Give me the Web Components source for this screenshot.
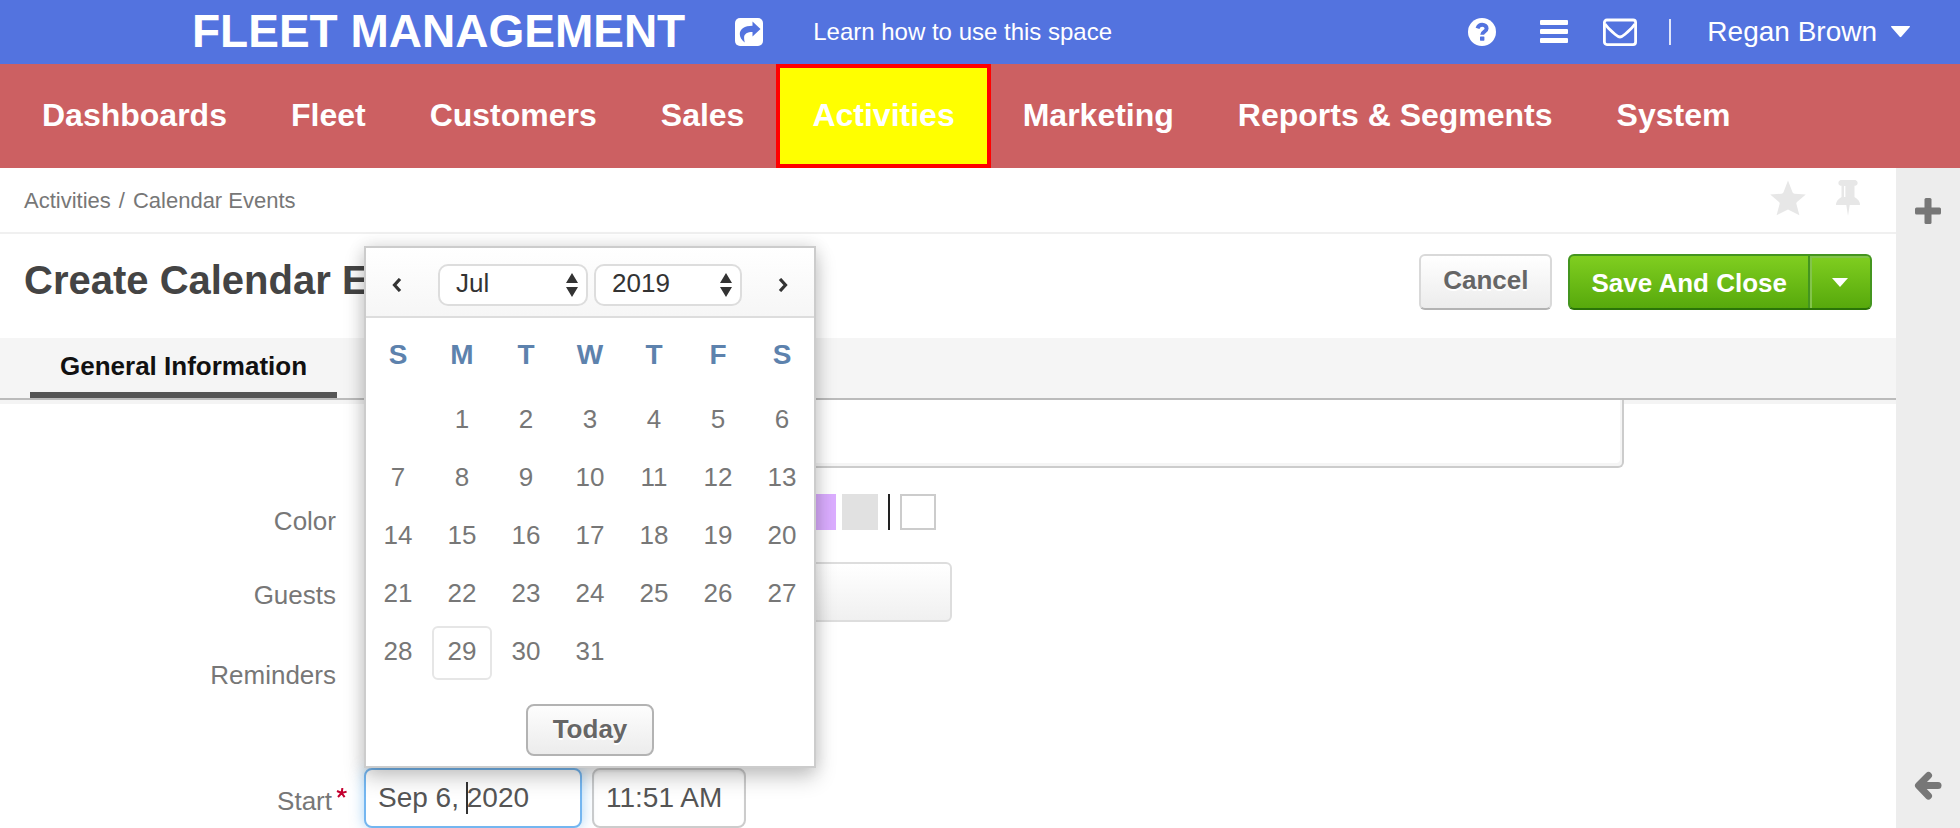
<!DOCTYPE html>
<html lang="en">
<head>
<meta charset="utf-8">
<meta name="viewport" content="width=device-width, initial-scale=1">
<title>Create Calendar Event</title>
<style>
  html, body { margin: 0; }
  body {
    background: #fff;
    color: #777;
    font: 26px/1.2 "Liberation Sans", Arial, Helvetica, sans-serif;
  }
</style>
</head>
<body>
<fleet-app></fleet-app>

<script>
const RESET = `
  *, *::before, *::after { box-sizing: border-box; }
  :host([hidden]) { display: none; }
  a { color: inherit; text-decoration: none; }
  button, input, select, textarea { font: inherit; color: inherit; margin: 0; }
  button { border: 0; padding: 0; background: none; cursor: pointer; }
  svg { display: block; }
`;

function define(name, css, html, setup) {
  const template = document.createElement("template");
  template.innerHTML = `<style>${RESET}${css}</style>${html}`;
  customElements.define(name, class extends HTMLElement {
    constructor() {
      super();
      this.attachShadow({ mode: "open" }).append(template.content.cloneNode(true));
    }
    connectedCallback() {
      if (setup && !this.ready) { this.ready = true; setup(this.shadowRoot, this); }
    }
  });
}

define("top-bar", `
  :host {
    display: flex; align-items: center; gap: 50px; height: 64px;
    padding: 0 50px 0 192px; background: #5373df; color: #fff; white-space: nowrap;
  }
  .brand { font-size: 46px; font-weight: bold; }
  .learn { font-size: 24px; }
  .tools { display: flex; align-items: center; gap: 32px; margin-left: auto; }
  .tools button { display: grid; place-items: center; width: 34px; height: 34px; }
  .tools .help { margin-right: 6px; }
  .rule { width: 2px; height: 26px; margin-right: 4px; background: #dfe5fa; }
  .tools .user { display: flex; align-items: center; gap: 14px; width: auto; font-size: 28px; }
`, `
  <a class="brand" href="#">FLEET MANAGEMENT</a>
  <button type="button" aria-label="Share">
    <svg width="28" height="28" viewBox="0 0 28 28"><rect width="28" height="28" rx="5" fill="#fff"/>
      <path d="M17.500 3.500 25.500 11l-8 7.500v-4.400c-5 0-8.400 1.800-8.400 5.500 0 2.200.4 3.400.6 4.900-3.200-2.200-4.900-5.200-4.900-8.400 0-5 4.700-8.400 12.700-8.400z" fill="#5373df"/></svg>
  </button>
  <a class="learn" href="#">Learn how to use this space</a>
  <div class="tools">
    <button type="button" class="help" aria-label="Help">
      <svg width="28" height="28" viewBox="0 0 28 28"><circle cx="14" cy="14" r="14" fill="#fff"/>
        <path d="M9.500 10.300c.8-2.300 2.400-3.500 4.700-3.500 2.600 0 4.400 1.600 4.400 3.700 0 3.200-4.400 3-4.400 6.200" fill="none" stroke="#5373df" stroke-width="4"/>
        <rect x="12" y="18.500" width="4.400" height="4.200" rx=".6" fill="#5373df"/></svg>
    </button>
    <button type="button" aria-label="Menu">
      <svg width="28" height="24" viewBox="0 0 28 24" fill="#fff"><rect width="28" height="5" rx="1"/><rect y="9" width="28" height="5" rx="1"/><rect y="18" width="28" height="5" rx="1"/></svg>
    </button>
    <button type="button" aria-label="Mail">
      <svg width="34" height="28" viewBox="0 0 34 28" fill="none" stroke="#fff" stroke-width="2.800" stroke-linejoin="round"><rect x="1.400" y="2" width="31.200" height="24.600" rx="2.500"/><path d="M2 6c3 4.500 6.500 7 9.500 9.800 2.300 2 3.500 3.200 5.500 3.200s3.200-1.200 5.500-3.200C25.500 13 29 10.500 32 6"/></svg>
    </button>
    <span class="rule"></span>
    <button type="button" class="user">Regan Brown
      <svg width="19" height="12" viewBox="0 0 19 12"><path d="M.5 0h18q.8.2.3 1L10.300 10.800q-.8.8-1.600 0L.2 1Q-.2.2.5 0z" fill="#fff"/></svg>
    </button>
  </div>
`);

define("nav-item", `
  :host { display: flex; }
  a { display: flex; align-items: center; padding: 0 32px 2px; font-size: 32px; font-weight: bold; color: #fff; white-space: nowrap; }
  :host([active]) a { border: 4px solid #f00; background: #ff0; }
`, `<a href="#"><slot></slot></a>`);

define("main-nav", `
  :host { display: block; background: #cc6062; }
  nav { display: flex; height: 104px; padding-left: 10px; }
`, `<nav aria-label="Main"><slot></slot></nav>`);

define("bread-crumbs", `
  :host { display: flex; align-items: center; height: 66px; padding: 2px 36px 0 24px; border-bottom: 2px solid #f0f0f0; font-size: 22px; }
  .marks { display: flex; align-items: center; gap: 30px; margin-left: auto; padding-bottom: 6px; }
  .sep { margin: 0 8px; }
`, `
  <a href="#">Activities</a><span class="sep">/</span><a href="#">Calendar Events</a>
  <div class="marks">
    <button type="button" aria-label="Favourite"><svg width="36" height="36" viewBox="0 0 36 36"><path d="M18 .5 22.500 12.200q.5 1.300 2 1.500L35.800 14.500 27 22q-.9.9-.6 2.100l3 11.200L18 29.500 6.600 35.300l3-11.200q.3-1.200-.6-2.100L.2 14.500l11.300-.8q1.500-.2 2-1.500z" fill="#e7e7e7"/></svg></button>
    <button type="button" aria-label="Pin"><svg width="24" height="36" viewBox="0 0 24 36"><path d="M4.500 0h15q2.200 1 2.200 3t-2.200 2.800h-1V17Q24 20 24 25H13.700L12 36l-1.700-11H0q0-5 5.500-8V5.800h-1Q2.300 5 2.300 3t2.200-3z" fill="#e7e7e7"/><path d="M8.700 6v11" stroke="#fff" stroke-width="1.400"/></svg></button>
  </div>
`);

define("page-heading", `
  :host { display: flex; align-items: flex-start; gap: 16px; height: 104px; padding: 20px 24px 0; }
  h1 { flex: 1; margin: 0; font-size: 40px; line-height: 52px; color: #444; white-space: nowrap; }
  .cancel, .split { height: 56px; border-radius: 6px; font-weight: bold; }
  .cancel {
    padding: 0 22px 2px; border: 2px solid #d9d9d9; border-bottom-color: #b3b3b3;
    background: linear-gradient(#fff, #ececec); color: #666; text-shadow: 0 2px 0 #fff;
  }
  .split {
    display: flex; border: 2px solid #44951f; border-bottom-color: #2a7408; overflow: hidden;
    background: linear-gradient(#80ce20, #57a90c); color: #fff; text-shadow: 0 2px 0 #3f8f14;
  }
  .split .save { padding: 4px 21px 0; }
  .split .more { display: grid; place-items: center; width: 62px; border-left: 2px solid #44951f; box-shadow: inset 2px 2px 0 #83c44b; }
`, `
  <h1><slot></slot></h1>
  <button type="button" class="cancel">Cancel</button>
  <div class="split">
    <button type="button" class="save">Save And Close</button>
    <button type="button" class="more" aria-label="More save options"><svg width="16" height="9" viewBox="0 0 16 9"><path d="M0 0h16L8 9z" fill="#fff"/></svg></button>
  </div>
`);

define("tab-bar", `
  :host { display: flex; height: 62px; padding: 0 30px; background: #f5f5f5; border-bottom: 2px solid #bbb; box-shadow: 0 4px 0 #f4f4f4; }
  a { display: flex; align-items: center; height: 60px; padding: 4px 30px 0; border-bottom: 6px solid #555; color: #111; font-weight: bold; white-space: nowrap; }
`, `<a href="#" aria-current="page"><slot></slot></a>`);

define("side-rail", `
  :host { display: flex; flex-direction: column; justify-content: space-between; align-items: center; padding: 30px 0 27px; background: #ededed; }
`, `
  <button type="button" aria-label="Add widget"><svg width="26" height="26" viewBox="0 0 26 26" fill="#777"><rect x="9.500" width="7" height="26" rx="1.500"/><rect y="9.500" width="26" height="7" rx="1.500"/></svg></button>
  <button type="button" aria-label="Collapse"><svg width="28" height="30" viewBox="0 0 28 30" fill="none" stroke="#777" stroke-width="7" stroke-linejoin="round" stroke-linecap="round"><path d="M14.500 4.500 4.500 14.500 14.500 25"/><path d="M6 14.500H24"/></svg></button>
`);

define("form-row", `
  :host { display: grid; grid-template-columns: 336px 1fr; column-gap: 28px; min-height: 60px; margin-bottom: 20px; }
  .label { padding-top: 6px; line-height: 54px; text-align: right; }
  :host([required]) .label { position: relative; padding-right: 4px; }
  .star { display: none; }
  :host([required]) .star { display: block; position: absolute; left: 100%; top: 20px; }
  .field { min-width: 0; }
`, `
  <div class="label"><slot name="label"></slot><svg class="star" width="11" height="10" viewBox="0 0 11 10" fill="none" stroke="#c3002f" stroke-width="2"><path d="M6.400 0 5.600 5M1 3l4.600 2M5.600 5 10.600 3.600M5.600 5 2 9M5.600 5 8.600 9.200"/></svg></div>
  <div class="field"><slot></slot></div>
`);

define("color-picker", `
  :host { display: flex; gap: 6px; padding-top: 6px; }
  button { width: 36px; height: 36px; }
  .none { border: 2px solid #ccc; background: #fff; }
  .bar { width: 2px; height: 36px; margin: 0 4px; background: #222; }
`, ``, root => {
  const none = '<button type="button" class="none" aria-label="Custom colour"></button>';
  const bar = '<span class="bar"></span>';
  const colors = ["#5484ed", "#a4bdfc", "#46d6db", "#7ae7bf", "#51b749", "#fbd75b", "#ffb878", "#ff887c", "#dc2127", "#dbadff", "#e1e1e1"];
  root.innerHTML += none + bar + colors.map(c => `<button type="button" aria-label="${c}" style="background:${c}"></button>`).join("") + bar + none;
});

define("month-picker", `
  :host { display: block; border: 2px solid #ccc; background: #fff; box-shadow: 0 10px 20px rgba(0, 0, 0, .2), 0 0 16px rgba(0, 0, 0, .12); }
  header { display: flex; align-items: center; justify-content: space-between; height: 70px; padding: 6px 26px 0; border-bottom: 2px solid #ddd; background: linear-gradient(#fff, #f6f6f6); }
  .pick { display: flex; gap: 6px; }
  .select { display: grid; align-items: center; width: 150px; }
  .select.year { width: 148px; }
  .select > * { grid-area: 1 / 1; }
  .select svg { justify-self: end; margin-right: 10px; pointer-events: none; }
  select { appearance: none; width: 100%; height: 42px; padding: 0 32px 2px 16px; border: 2px solid #ddd; border-radius: 10px; background: #fff; color: #333; }
  table { width: 100%; border-collapse: collapse; table-layout: fixed; }
  th { height: 74px; padding: 0; color: #5d82ad; font-size: 28px; }
  td { height: 58px; padding: 0 2px; }
  td button { display: block; width: 100%; height: 54px; padding: 0 0 2px; border: 2px solid transparent; border-radius: 6px; }
  td .now { border-color: #e6e6e6; }
  footer { display: flex; justify-content: center; padding: 22px 0 10px; }
  .today { width: 128px; height: 52px; border: 2px solid #b3b3b3; border-radius: 8px; background: linear-gradient(#fdfdfd, #ececec); color: #666; font-weight: bold; text-shadow: 0 2px 0 #fff; }
`, `
  <header>
    <button type="button" aria-label="Previous month"><svg width="10" height="14" viewBox="0 0 10 14"><path d="M8 1 2.500 7l5.500 6" fill="none" stroke="#333" stroke-width="3.200"/></svg></button>
    <div class="pick">
      <label class="select"><select aria-label="Month"><option>Jul</option></select>
        <svg width="12" height="24" viewBox="0 0 12 24" fill="#333"><path d="M6 0 12 10H0zM6 24 0 14h12z"/></svg></label>
      <label class="select year"><select aria-label="Year"><option>2019</option></select>
        <svg width="12" height="24" viewBox="0 0 12 24" fill="#333"><path d="M6 0 12 10H0zM6 24 0 14h12z"/></svg></label>
    </div>
    <button type="button" aria-label="Next month"><svg width="10" height="14" viewBox="0 0 10 14"><path d="m2 1 5.500 6L2 13" fill="none" stroke="#333" stroke-width="3.200"/></svg></button>
  </header>
  <table><thead><tr></tr></thead><tbody></tbody></table>
  <footer><button type="button" class="today">Today</button></footer>
`, root => {
  root.querySelector("thead tr").innerHTML = [..."SMTWTFS"].map(d => `<th scope="col">${d}</th>`).join("");
  const firstWeekday = 1, days = 31, today = 29;
  let rows = "";
  for (let start = 1 - firstWeekday; start <= days; start += 7) {
    rows += "<tr>";
    for (let day = start; day < start + 7; day++) {
      rows += day < 1 || day > days ? "<td></td>"
        : `<td><button type="button"${day === today ? ' class="now"' : ""}>${day}</button></td>`;
    }
    rows += "</tr>";
  }
  root.querySelector("tbody").innerHTML = rows;
});

define("date-time-field", `
  :host { display: flex; gap: 10px; }
  .date { position: relative; width: 218px; }
  input { display: block; width: 100%; height: 60px; padding: 0 12px; border: 2px solid #ccc; border-radius: 8px; background: #fff; color: #555; font-size: 28px; outline: 0; box-shadow: inset 0 2px 2px rgba(0, 0, 0, .06); }
  .date input { border-color: #74b6f0; box-shadow: 0 0 14px rgba(82, 168, 236, .5); }
  .time { width: 154px; }
  .caret { position: absolute; left: 102px; top: 14px; width: 2px; height: 32px; background: #333; }
  month-picker { position: absolute; left: 0; bottom: 100%; width: 452px; z-index: 5; }
`, `
  <div class="date"><input id="date" aria-label="Start date" value="Sep 6, 2020"><span class="caret"></span><month-picker></month-picker></div>
  <input class="time" aria-label="Start time" value="11:51 AM">
`);

define("event-form", `
  :host { display: block; }
  textarea { display: block; width: calc(100% - 272px); height: 68px; border: 2px solid #ccc; border-top: 0; border-radius: 0 0 6px 6px; resize: none; background: #fff; outline: 0; box-shadow: inset -2px -3px 0 #f5f5f5; }
  .guests { display: block; width: 588px; height: 60px; border: 2px solid #ddd; border-radius: 6px; background: linear-gradient(#fff, #f0f0f0); }
  .colors { margin-bottom: 14px; }
  .reminders { margin-bottom: 66px; }
  .start { margin-bottom: 0; }
`, `
  <form-row><textarea aria-label="Description"></textarea></form-row>
  <form-row class="colors"><span slot="label">Color</span><color-picker></color-picker></form-row>
  <form-row><label slot="label" for="guests">Guests</label><input id="guests" class="guests"></form-row>
  <form-row class="reminders"><span slot="label">Reminders</span></form-row>
  <form-row class="start" required><span slot="label">Start</span><date-time-field></date-time-field></form-row>
`);

define("fleet-app", `
  :host { display: flex; flex-direction: column; min-height: 100vh; }
  .body { display: grid; grid-template-columns: 1fr 64px; flex: 1; }
  main { min-width: 0; }
`, `
  <top-bar></top-bar>
  <main-nav>
    <nav-item>Dashboards</nav-item><nav-item>Fleet</nav-item><nav-item>Customers</nav-item><nav-item>Sales</nav-item><nav-item active>Activities</nav-item><nav-item>Marketing</nav-item><nav-item>Reports &amp; Segments</nav-item><nav-item>System</nav-item>
  </main-nav>
  <div class="body">
    <main>
      <bread-crumbs></bread-crumbs>
      <page-heading>Create Calendar Event</page-heading>
      <tab-bar>General Information</tab-bar>
      <event-form></event-form>
    </main>
    <side-rail></side-rail>
  </div>
`);
</script>
</body>
</html>
